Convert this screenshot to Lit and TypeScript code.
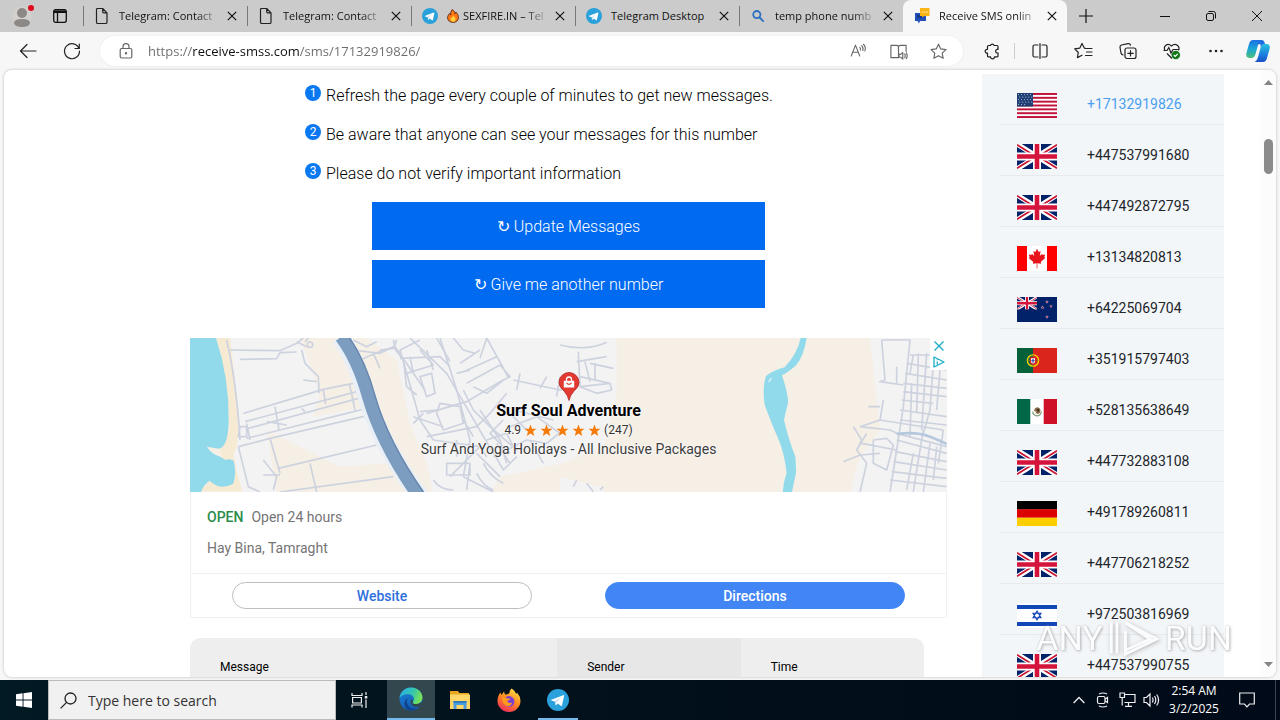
import { LitElement, html, svg, css, nothing, type TemplateResult } from "lit";
import { customElement, property } from "lit/decorators.js";

const line = (body: unknown, size = 20) => html`
  <svg width=${size} height=${size} viewBox="0 0 20 20" fill="none" stroke="currentColor"
    stroke-width="1.2" stroke-linecap="round" stroke-linejoin="round" aria-hidden="true">${body}</svg>`;

const pageIcon = html`<svg width="16" height="18" viewBox="0 0 16 18" fill="none" stroke="#222" stroke-width="1.2" stroke-linejoin="round">
  <path d="M3.5 1.5h5.2l4.3 4.3v9.4q0 1.3-1.3 1.3H3.8q-1.3 0-1.3-1.3V2.5q0-1 1-1zM8.7 1.5v3.3q0 1 1 1H13"/></svg>`;

const telegramIcon = (size: number) => html`<svg width=${size} height=${size} viewBox="0 0 24 24">
  <circle cx="12" cy="12" r="12" fill="#2aa1da"/>
  <path fill="#fff" d="M4.8 11.8 17.6 6.7c.8-.3 1.2.1 1 .9l-2.2 10.1c-.2.8-.7 1-1.4.6l-3.3-2.4-1.6 1.6c-.4.4-.8.3-.9-.3l-.7-3.5-3.6-1.1c-.7-.2-.7-.6-.1-.8z"/>
  <path fill="#b9d9ec" d="m8.5 13.7 7.1-4.9-5.4 5.6-.5 2.9z"/></svg>`;

const searchGlyph = html`<svg width="16" height="16" viewBox="0 0 16 16" fill="none" stroke="#2d6fc0" stroke-width="1.8" stroke-linecap="round">
  <circle cx="6.8" cy="6.6" r="3.6"/><path d="m9.6 9.5 3.6 3.6"/></svg>`;

const smsIcon = html`<svg width="18" height="16" viewBox="0 0 18 16">
  <path fill="#2350b8" d="M2 5h11v8H7l-1 2.500-1.500-2.500H2z"/><path fill="#173a8c" d="M4 7h6v3H4z"/>
  <path fill="#fbb416" d="M7 0h9.500v8H11L9 9.500V8H7z"/><path fill="#fff3c8" d="M9 3.500h1.200v1.200H9zM11.300 3.500h1.200v1.200h-1.200zM13.600 3.500h1.200v1.200h-1.200z"/></svg>`;

const flame = html`<svg width="12" height="14" viewBox="0 0 12 14">
  <path d="M5 .6c2.400 1.200 3 2.800 2.800 4.200.8-.3 1-1 1.100-1.700C10.600 4.700 11.400 6.600 11.400 8.600c0 3-2.300 4.800-5.300 4.800S.6 11.600.6 8.800c0-2.200 1.200-3.300 2-4.400.3.900.6 1.300 1.200 1.500C3.500 3.800 4.200 2 5 .6z" fill="#ff7a14" stroke="#4a1405" stroke-width=".8"/>
  <path d="M6 6.800c2 1.500 2.500 2.600 2.500 3.700 0 1.500-1 2.300-2.400 2.300s-2.500-.8-2.500-2.200C3.600 9.200 5.600 8.600 6 6.800z" fill="#ffd23c"/></svg>`;

const cross = html`<svg width="10" height="10" viewBox="0 0 10 10" stroke="currentColor" stroke-width="1.2"><path d="m.8.8 8.400 8.400M9.200.8.800 9.200"/></svg>`;

const ukBody = svg`
  <path fill="#012169" d="M0 0h40v25H0z"/>
  <path stroke="#fff" stroke-width="5" d="m0 0 40 25M40 0 0 25"/>
  <path stroke="#c8102e" stroke-width="1.600" d="m0 .8 18 11.200M22 13l18 11.200M40 .8 22 12M18 13 0 24.200"/>
  <path stroke="#fff" stroke-width="8" d="M20 0v25M0 12.500h40"/>
  <path stroke="#d4143a" stroke-width="4.600" d="M20 0v25M0 12.500h40"/>`;

const star = (x: number, y: number, r: number, fill: string) => {
  const pts = Array.from({ length: 10 }, (_, i) => {
    const a = -Math.PI / 2 + (i * Math.PI) / 5;
    const d = i % 2 ? r * 0.42 : r;
    return `${(x + d * Math.cos(a)).toFixed(2)},${(y + d * Math.sin(a)).toFixed(2)}`;
  });
  return svg`<polygon points=${pts.join(" ")} fill=${fill} />`;
};

const flags: Record<string, unknown> = {
  us: svg`<path fill="#fff" d="M0 0h40v25H0z"/>
    ${[0, 1, 2, 3, 4, 5, 6].map((i) => svg`<rect y=${(i * 50) / 13} width="40" height="1.92" fill="#bf1238"/>`)}
    <path fill="#1f3f74" d="M0 0h16v13.460H0z"/>
    ${Array.from({ length: 23 }, (_, i) => svg`<circle cx=${1.6 + (i % 5) * 3 + (Math.floor(i / 5) % 2) * 1.2} cy=${1.6 + Math.floor(i / 5) * 2.5} r=".55" fill="#b8c8e0"/>`)}`,
  gb: ukBody,
  ca: svg`<path fill="#fff" d="M0 0h40v25H0z"/><path fill="#f00" d="M0 0h10v25H0zM30 0h10v25H30z"/>
    <path fill="#e8141c" d="m20 2.800 1.700 3.200 1.900-.9-.8 5 2.300-2.400.5 1.300 2.600-.4-.9 2.700 1 .8-4.600 3.900.5 1.800-3.900-.6.100 5h-.8l.1-5-3.900.6.500-1.800-4.600-3.900 1-.8-.9-2.700 2.600.4.500-1.300 2.300 2.400-.8-5 1.900.9z"/>`,
  nz: svg`<path fill="#012169" d="M0 0h40v25H0z"/><svg width="20" height="12.500" viewBox="0 0 40 25">${ukBody}</svg>
    ${[[30, 5], [25.5, 10.5], [34, 9.3], [30, 20]].map(([x, y]) => svg`${star(x, y, 1.9, "#c9d4ea")}${star(x, y, 1.2, "#c8102e")}`)}`,
  pt: svg`<path fill="#da251d" d="M0 0h40v25H0z"/><path fill="#06603a" d="M0 0h16v25H0z"/>
    <circle cx="16" cy="12.500" r="5.600" fill="none" stroke="#f5d800" stroke-width="1.400"/><path stroke="#8a7d10" stroke-width=".7" fill="none" d="M10.500 12.500h11M16 7v11"/>
    <path fill="#d8222a" d="M12.800 9h6.400v4.500q0 3-3.200 3.500-3.200-.5-3.200-3.500z"/><path fill="#fff" d="M14 10.200h4v3.200q0 1.800-2 2.200-2-.4-2-2.200z"/><path fill="#2a4a9c" d="M15.400 10.800h1.200v4h-1.200z"/><path fill="#2a4a9c" d="M14.200 12.200h3.600v1h-3.600z"/>`,
  mx: svg`<path fill="#fff" d="M0 0h40v25H0z"/><path fill="#006847" d="M0 0h13.300v25H0z"/><path fill="#ce1126" d="M26.700 0H40v25H26.700z"/>
    <path fill="none" stroke="#7a9a70" stroke-width="1.200" d="M15.600 12.500q.6 4.200 4.400 4.300t4.400-4.300"/>
    <path fill="#8a6a42" d="M17 11.500q1-3.300 3.600-3.300 2.600.6 3 3.300-.2 2.800-2.600 3.600-1.400-1-3-.8 1.400-.8 1.600-1.600-1.500.2-2.600-1.200z"/><path fill="#3a3226" d="M20 10h2v2.500h-2z"/>`,
  de: svg`<path fill="#000" d="M0 0h40v8.400H0z"/><path fill="#d00" d="M0 8.300h40v8.400H0z"/><path fill="#ffce00" d="M0 16.700h40V25H0z"/>`,
  il: svg`<path fill="#fff" d="M0 0h40v25H0z"/><path fill="#1247b8" d="M0 2h40v4H0zM0 19h40v4H0z"/>
    <path fill="none" stroke="#1247b8" stroke-width="1.100" d="m20 8 4 6.800h-8zM20 17l-4-6.800h8z"/>`,
};

const tabs: { icon: TemplateResult; title: string; emoji?: boolean; active?: boolean }[] = [
  { icon: pageIcon, title: "Telegram: Contact" },
  { icon: pageIcon, title: "Telegram: Contact" },
  { icon: telegramIcon(16), title: "SEXFIRE.IN – Tel", emoji: true },
  { icon: telegramIcon(16), title: "Telegram Desktop" },
  { icon: searchGlyph, title: "temp phone numb" },
  { icon: smsIcon, title: "Receive SMS onlin", active: true },
];

const numbers: [string, string][] = [
  ["us", "+17132919826"],
  ["gb", "+447537991680"],
  ["gb", "+447492872795"],
  ["ca", "+13134820813"],
  ["nz", "+64225069704"],
  ["pt", "+351915797403"],
  ["mx", "+528135638649"],
  ["gb", "+447732883108"],
  ["de", "+491789260811"],
  ["gb", "+447706218252"],
  ["il", "+972503816969"],
  ["gb", "+447537990755"],
];

const tips = [
  "Refresh the page every couple of minutes to get new messages.",
  "Be aware that anyone can see your messages for this number",
  "Please do not verify important information",
];

@customElement("browser-tabs")
class BrowserTabs extends LitElement {
  static styles = css`
    :host { display: flex; height: 32px; background: #cbcbcb; color: #111; font: 11px/16px "Open Sans", "Noto Sans", sans-serif; }
    button { border: 0; padding: 0; background: none; color: inherit; font: inherit; display: flex; align-items: center; justify-content: center; }
    .lead { display: flex; align-items: center; width: 83px; flex: none; gap: 18px; padding-left: 12px; box-sizing: border-box; }
    .tab { display: flex; align-items: center; flex: 0 1 164px; min-width: 0; padding: 0 9px 0 10px; gap: 8px; box-sizing: border-box; position: relative; }
    .tab::before { content: ""; width: 1px; height: 20px; background: #777; position: absolute; left: 0; top: 6px; }
    .tab.active { background: #f7f7f7; border-radius: 8px 8px 0 0; }
    .tab.active::before { display: none; }
    .icon { flex: none; width: 18px; display: flex; justify-content: center; }
    .name { flex: 1; min-width: 0; justify-content: flex-start; gap: 4px; overflow: hidden; white-space: nowrap; mask-image: linear-gradient(to right, #000 78%, #0003 98%); }
    .whole { mask-image: none; }
    .name svg { flex: none; }
    .close { flex: none; width: 12px; height: 16px; }
    .plus { width: 38px; }
    .controls { margin-left: auto; display: flex; }
    .controls button { width: 46px; }
  `;
  render() {
    return html`
      <div class="lead">
        <button aria-label="Profile"><svg width="23" height="26" viewBox="0 0 23 26">
          <circle cx="10" cy="13" r="9.500" fill="#d3d0cd"/><circle cx="10" cy="10" r="5" fill="#8b8886"/><path d="M2 20q0-4 8-4t8 4q-1 4-8 4t-8-4z" fill="#8b8886"/><circle cx="19" cy="5" r="3" fill="#e00b1c"/></svg></button>
        <button aria-label="Workspaces"><svg width="14" height="14" viewBox="0 0 14 14" fill="none" stroke="#111" stroke-width="1.300"><rect x=".7" y=".7" width="12.600" height="12.600" rx="2"/><path d="M1 2.700h12" stroke-width="2.600"/><path d="M4.500 3v10"/></svg></button>
      </div>
      ${tabs.map((t) => html`
        <div class="tab ${t.active ? "active" : ""}">
          <span class="icon">${t.icon}</span>
          <button class="name ${t.title === "Telegram Desktop" ? "whole" : ""}">${t.emoji ? flame : nothing}<span>${t.title}</span></button>
          <button class="close" aria-label="Close tab">${cross}</button>
        </div>`)}
      <button class="plus" aria-label="New tab"><svg width="14" height="14" viewBox="0 0 14 14" stroke="#111" stroke-width="1.200"><path d="M7 0v14M0 7h14"/></svg></button>
      <div class="controls">
        <button aria-label="Minimize"><svg width="10" height="10" viewBox="0 0 10 10" stroke="#111"><path d="M0 5.500h10"/></svg></button>
        <button aria-label="Restore"><svg width="10" height="10" viewBox="0 0 10 10" fill="none" stroke="#111"><rect x=".5" y="2.500" width="7" height="7" rx="1.500"/><path d="M2.500.5h5q2 0 2 2v5"/></svg></button>
        <button aria-label="Close"><svg width="10" height="10" viewBox="0 0 10 10" stroke="#111"><path d="m0 0 10 10M10 0 0 10"/></svg></button>
      </div>`;
  }
}

@customElement("address-bar")
class AddressBar extends LitElement {
  static styles = css`
    :host { display: flex; align-items: center; height: 38px; background: #f7f7f7; color: #222; padding: 0 2px 0 6px; box-sizing: border-box; }
    button { border: 0; padding: 0; background: none; color: inherit; display: flex; align-items: center; justify-content: center; width: 44px; flex: none; }
    .pill { flex: 1; min-width: 0; display: flex; align-items: center; height: 30px; background: #fff; border-radius: 15px; margin: 0 7px 0 6px; padding: 0 5px 0 4px; box-sizing: border-box; color: #666; box-shadow: 0 0 2px #e4e4e4; }
    .pill button { width: 40px; }
    .pill .lock { width: 44px; }
    .url { flex: 1; min-width: 0; border: 0; outline: 0; padding: 0; font: 13px/20px "Open Sans", "Noto Sans", sans-serif; color: #555;
      background: linear-gradient(to right, #6b6b6b 45px, #111 45px, #111 151px, #6b6b6b 151px); background-clip: text; -webkit-background-clip: text; -webkit-text-fill-color: transparent; }
    .sep { width: 1px; height: 16px; background: #ccc; flex: none; margin-right: 3px; }
    .ext { width: 44px; }
    .copilot { width: 40px; }
  `;
  render() {
    return html`
      <button aria-label="Back">${line(svg`<path d="M18 10H2.500M9 3.500 2.500 10 9 16.500"/>`)}</button>
      <button aria-label="Refresh">${line(svg`<path d="M17 7.500A7.500 7.500 0 1 0 17.500 10M17.300 3v4.500H13"/>`)}</button>
      <div class="pill">
        <button class="lock" aria-label="Site information">${line(svg`<rect x="4.200" y="7.500" width="11.600" height="9.500" rx="1.500"/><path d="M7 7.500V5.600a3 3 0 0 1 6 0v1.900"/><circle cx="10" cy="12.200" r=".6" fill="currentColor"/>`)}</button>
        <input class="url" aria-label="Address" value="https://receive-smss.com/sms/17132919826/">
        <button aria-label="Read aloud">${line(svg`<path d="m2.500 15.500 4.700-12 4.700 12M4.200 11.300h6M12 6q1.200 1.200.6 3M14 4q2.400 2.400 1.300 5.500M16 2.500q3.200 3 1.600 7.500"/>`, 18)}</button>
        <button aria-label="Immersive reader">${line(svg`<path d="M10 16.500H2V3.500h6q2 0 2 2v11M10 5.500q0-2 2-2h6V10M10.500 13v3h1.800l2.200 2v-7l-2.200 2zM16.500 12.500q1.200 2 0 4M18.300 11.500q1.700 3 0 6"/>`, 19)}</button>
        <button aria-label="Favourite">${line(svg`<path d="m10 2.300 2.400 5 5.500.7-4 3.800 1 5.400-4.900-2.600-4.900 2.600 1-5.400-4-3.800 5.500-.7z"/>`, 19)}</button>
      </div>
      <button class="ext" aria-label="Extensions">${line(svg`<path d="M6.500 4.500h2a1.900 1.900 0 0 1 3.600 0H15q1 0 1 1v3a1.800 1.800 0 1 0 0 3.400v3q0 1-1 1h-2.600a1.900 1.900 0 0 1-3.800 0H6.500q-1 0-1-1v-2.800a1.900 1.900 0 1 1 0-3.700V5.500q0-1 1-1z"/>`)}</button>
      <span class="sep"></span>
      <button aria-label="Split screen">${line(svg`<path d="M8 4H4.500Q3 4 3 5.500v9Q3 16 4.500 16H8M12 4h3.500Q17 4 17 5.500v9q0 1.500-1.500 1.500H12M10 2.500v15"/>`)}</button>
      <button aria-label="Favorites">${line(svg`<path d="m12 7.500-1.700-.4L8 2.500 5.700 7.200l-5 .7 3.600 3.600-.9 5.100L8 14.200M12.500 7.500H18M12.500 11H18M11.500 14.500H18"/>`)}</button>
      <button aria-label="Collections">${line(svg`<rect x="7" y="7" width="11" height="10.500" rx="2"/><path d="M12.500 9.500v5.500M9.800 12.300h5.500M5 14Q3.500 13.500 3 12L2 6.500Q1.800 4.500 3.500 4L10 2.700q2-.3 2.500 1.500"/>`)}</button>
      <button aria-label="Browser essentials"><svg width="20" height="20" viewBox="0 0 20 20" fill="none" stroke="currentColor" stroke-width="1.200"><path d="M3 9.500C.8 5 5.500 1.300 9.500 5 13.500 1.300 18.500 5 16.500 9.500M1.500 9.500H5l1.800-3L9 12l2-3.500h5.500M5 12.500l5 5"/><circle cx="13.800" cy="14" r="4.300" fill="#137a1c" stroke="none"/><path d="m11.800 14 1.400 1.400 2.600-2.600" stroke="#fff"/></svg></button>
      <button aria-label="Settings and more"><svg width="20" height="20" viewBox="0 0 20 20" fill="#222"><circle cx="4.500" cy="10" r="1.300"/><circle cx="10" cy="10" r="1.300"/><circle cx="15.500" cy="10" r="1.300"/></svg></button>
      <button class="copilot" aria-label="Copilot"><svg width="24" height="24" viewBox="0 0 24 24">
        <defs><linearGradient id="c1" x2="0" y2="1"><stop stop-color="#1b6fe0"/><stop offset=".5" stop-color="#1aa7d8"/><stop offset="1" stop-color="#4fc07a"/></linearGradient>
        <linearGradient id="c2" x2="0" y2="1"><stop stop-color="#27c0dc"/><stop offset=".6" stop-color="#1b7ee0"/><stop offset="1" stop-color="#1a4fc4"/></linearGradient></defs>
        <path fill="url(#c1)" d="M7 1h8.500Q13 2 12 6L9.500 15q-1 4-4 4H3Q-.8 18.500.6 13.500L3 5q1-4 4-4z"/>
        <path fill="url(#c2)" d="M17 23H8.500q2.500-1 3.500-5l2.500-9q1-4 4-4H21q3.800.5 2.400 5.500L21 19q-1 4-4 4z"/>
        <path fill="#1b6fe0" d="M13 1h3q2 .3 2.600 2.500L19 5q-3.500.2-4.500 4l.2-1Q15 3 11.500 6z"/></svg></button>`;
  }
}

@customElement("ad-card")
class AdCard extends LitElement {
  static styles = css`
    :host { display: block; border: 1px solid #f1f1f1; border-top: 0; font: 14px/20px Roboto, sans-serif; color: #757575; position: relative; }
    .map { position: relative; height: 154px; margin: 0 -1px; overflow: hidden; background: #f5efe6; }
    .map > svg { display: block; width: 100%; height: 100%; }
    .place { position: absolute; inset: 34px 0 0; display: flex; flex-direction: column; align-items: center; color: #3c3c3c; }
    .place, .place * { text-shadow: 0 0 2px #fff, 0 0 2px #fff; }
    .pin { flex: none; }
    .title { font-size: 16px; font-weight: 700; color: #000; line-height: 20px; margin: 0; }
    .rating { display: flex; align-items: center; gap: 3px; font-size: 12px; line-height: 18px; color: #333; }
    .tag { font-size: 14px; line-height: 20px; }
    .marks { position: absolute; top: 0; right: 0; width: 17px; background: #fff; display: flex; flex-direction: column; align-items: center; }
    .marks button { border: 0; padding: 0; background: none; width: 17px; height: 16px; display: flex; align-items: center; justify-content: center; }
    .info { padding: 15px 16px; display: flex; flex-direction: column; gap: 11px; border-bottom: 1px solid #f1f1f1; }
    .open { color: #2c8c4c; font-weight: 500; margin-right: 8px; }
    .actions { display: grid; grid-template-columns: 1fr 1fr; gap: 73px; padding: 8px 41px; }
    .actions a { box-sizing: border-box; height: 27px; line-height: 26px; border: 1px solid #bdbdbd; border-radius: 14px; text-align: center; color: #2f6fdc; text-decoration: none; font-weight: 500; }
    .actions .go { background: #4285f4; border-color: #4285f4; color: #fff; }
  `;
  render() {
    const star5 = html`<svg width="13" height="13" viewBox="0 0 13 13">${star(6.5, 6.8, 6.3, "#f57c0a")}</svg>`;
    return html`
      <div class="map">
        <svg viewBox="30 24 2271 462" preserveAspectRatio="none" fill="none" aria-hidden="true">
          <path fill="#f4f3f3" d="M150 24H360L420 190 400 260 560 230 620 400 480 410 260 300 290 490H180L160 350 180 300z"/>
          <path fill="#f4f3f3" d="M560 24H1310V200L1270 350 1150 400 960 440 930 490H760L740 400 690 280 650 90z"/>
          <path fill="#f4f3f3" d="M1140 440 1260 470 1280 490H1140zM2070 24H2301V486H2010L2040 380 2100 300z"/>
          <path fill="#f6ead2" d="M110 24h40q20 150 25 280l-5 50q-15 20-8 40l25 90H60l30-30 60 5-30-100 30-60z"/>
          <path fill="#90daeb" d="M30 24h78q40 120 38 250-2 80-30 82l-35-6q10 20 40 30l15 10q15-6 25 2 10 40-2 70-40 20-70-10-20 14-26 34H30z"/>
          <g stroke="#cdd2df" stroke-width="5" stroke-linejoin="round">
            <path d="M140 30q30 130 40 300M150 60 300 62 350 40 370 24M180 88 290 86 300 68 350 66M365 60 375 100 415 140 417 190M370 150 410 155M350 35 380 50M385 24l-10 12"/>
            <circle cx="390" cy="44" r="8"/>
            <path d="M190 250 430 178 520 160M195 275 530 185M205 295 535 205M200 325 560 235M200 280 210 330M285 230 297 300M430 180 437 222M508 160 525 240M180 290h20v30h-25zM375 245l-10-10M320 285l-60-10"/>
            <path d="M175 350 270 325 590 250M270 325 300 430M295 415 590 345M390 400 410 486M300 486 640 440M175 350 205 470 240 486M250 435h50M250 390l40 50-10 40"/>
            <path d="M530 160 590 320 690 486M520 60 600 70 640 50M540 90 610 60M580 70 600 115M640 30l5 20 90 130M520 30 560 50 590 35"/>
            <path d="M690 24 800 130 940 370M720 30 660 60 680 130 760 105 720 60M660 85 780 80 810 110M690 80l10 50M740 60l20 60M770 24l40 70M680 130 720 270 760 330M720 140l20 60 25-10-10-60zM640 50 670 90 680 170 710 195"/>
            <path d="M820 24 850 60 885 70M840 100 900 60M850 125 950 80M900 85l20-60M830 130 870 120M860 160 960 105 990 140 960 155 860 215 740 250M920 24l50 90 15 30M850 180 880 240 930 290 1010 360M1000 150 1140 180 1190 170M1010 180 1020 130M1080 175 1100 140M1140 140 1130 200"/>
            <path d="M780 24 830 180 870 330 850 440M780 220l60 10 10 50-60 20-20-50zM720 245 770 240M700 260 790 290M740 320 890 290 930 250 980 190M760 330 900 350 920 380M850 270 880 320M900 240 960 330 980 400M960 220 1040 300M920 330l60-20 20 40M940 380 1040 330 1100 340 1150 300"/>
            <path d="M800 400h70v35H800zM810 440 870 380 900 350M850 440 940 486M760 450q20 30 60 30M870 400l-10 80M890 430q20 40 50 50M910 400q20 40 60 60M890 370 960 440M930 350 970 420 1010 380M990 290 1070 260 1140 310M1050 330 1090 400M1000 240 1120 270"/>
            <path d="M650 30 640 55 600 60M880 170l40 20 50-40M700 280l30-30M830 330v50M950 340l40 60M970 270l-40 40 60 60"/>
            <path d="M1140 45q80 20 140-8M1195 65 1200 170 1250 190 1295 180 1290 160 1200 170M1190 95 1280 80M1230 100 1300 115M1215 95l15 60M1245 100v50M1200 140 1290 160M1180 470 1190 450M1220 460l20 25M1260 480l10-10"/>
          </g>
          <g transform="translate(1140 0)" stroke="#cdd2df" stroke-width="5" stroke-linejoin="round">
            <path d="M965 30h85l-20 200-20 130-20 126M965 30 975 150 960 155 1030 165M970 210 960 270 900 290M925 230h35M1010 110v50M960 270 1150 300M900 290 990 300 1010 310M880 290l25 40-15 30 30 40-20 86M850 395 900 375 960 370M920 310l-30 50M940 330 980 325 1000 345 980 420 940 400zM905 340 1010 360"/>
            <path d="M1040 100 1160 120M1035 130 1160 150M1030 160 1160 175M1030 185 1160 200M1025 210 1120 220M1020 240 1160 260M1020 270 1160 285M1010 310 1160 350M1010 330 1160 370M1005 365 1160 395M1000 395 1160 420M995 425 1160 445M990 450 1160 470M1060 75 1050 130M1075 70 1070 250M1100 70 1085 300M1120 100 1110 240 1090 310M1140 120 1130 240M1055 160 1050 320M1060 370 1040 480M1090 300 1070 420 1060 486M1110 340 1090 486M1130 350 1120 450M1150 300 1135 400M1050 75h60"/>
            <path stroke="#b6c8dd" stroke-width="8" d="M1010 312q60-8 100 8t50 22"/>
          </g>
          <path stroke="#e8eff7" stroke-width="54" d="M480 20Q530 90 560 200 600 340 720 500"/>
          <path stroke="#7c9cc0" stroke-width="40" d="M484 20Q536 90 566 200 606 340 718 500"/>
          <path stroke="#6885ab" stroke-width="4" d="M506 20Q556 90 586 200 626 340 740 500"/>
          <path fill="#90daeb" d="M1862 24h18q-10 60-34 84-24 20-40 28 20 60 18 84-8 30-12 50 14 60 34 110 2 30 2 48l-12 58h-28q2-30 12-58-8-60-22-94-30-70-44-110-8-50 4-86 20-16 56-26 38-40 48-88z"/>
          <path stroke="#e9fafd" stroke-width="4" d="m1766 156 8-12"/>
        </svg>
        <div class="place">
          <svg class="pin" width="22" height="29" viewBox="0 0 22 29"><path d="M11 28.500Q10 23.500 6 19 1 15 1 10.500a10 10 0 0 1 20 0Q21 15 16 19q-4 4.500-5 9.500z" fill="#e23a33" stroke="#b3261f" stroke-width=".8"/><path fill="#fff" d="M5.800 8.800h10.400v6.700H5.800z"/><path fill="none" stroke="#fff" stroke-width="1.300" d="M8.500 9V7.500a2.500 2.500 0 0 1 5 0V9"/><path fill="none" stroke="#e23a33" stroke-width="1.200" d="M8.500 10.800q2.500 3 5 0"/></svg>
          <h2 class="title">Surf Soul Adventure</h2>
          <div class="rating"><span>4.9</span>${[1, 2, 3, 4, 5].map(() => star5)}<span>(247)</span></div>
          <div class="tag">Surf And Yoga Holidays - All Inclusive Packages</div>
        </div>
        <div class="marks">
          <button aria-label="Close ad"><svg width="10" height="10" viewBox="0 0 10 10" stroke="#1badc5" stroke-width="1.400"><path d="m.5.500 9 9M9.500.500l-9 9"/></svg></button>
          <button aria-label="Ad choices"><svg width="12" height="12" viewBox="0 0 12 12" fill="none" stroke="#1badc5" stroke-width="1.300" stroke-linejoin="round"><path d="M1 1v10l10-5zM4.300 5.500v3M4.300 3.500v.7"/></svg></button>
        </div>
      </div>
      <div class="info">
        <div><span class="open">OPEN</span><span>Open 24 hours</span></div>
        <div>Hay Bina, Tamraght</div>
      </div>
      <div class="actions"><a href="#website">Website</a><a class="go" href="#directions">Directions</a></div>`;
  }
}

@customElement("number-row")
class NumberRow extends LitElement {
  @property() country = "";
  @property() number = "";
  @property({ type: Boolean }) current = false;
  static styles = css`
    :host { display: block; border-bottom: 1px solid #e6eaed; }
    .row { display: flex; align-items: center; gap: 30px; height: 50px; padding: 10px 0 0 17px; box-sizing: border-box; color: #212529; text-decoration: none; font: 14px/20px Roboto, sans-serif; }
    .row svg { flex: none; margin-top: 2px; }
    .current { color: #4a9ff0; }
  `;
  render() {
    return html`<a class="row ${this.current ? "current" : ""}" href="#${this.number}">
      <svg width="40" height="25" viewBox="0 0 40 25" aria-hidden="true">${flags[this.country]}</svg>
      <span>${this.number}</span></a>`;
  }
}

@customElement("task-bar")
class TaskBar extends LitElement {
  static styles = css`
    :host { display: flex; height: 40px; background: linear-gradient(to right, #021a23, #02101b 50%, #010a18); color: #fff; }
    button { border: 0; padding: 0; background: none; color: inherit; display: flex; align-items: center; justify-content: center; flex: none; width: 48px; }
    .search { display: flex; align-items: center; flex: 0 1 288px; box-sizing: border-box; background: #f1f1f1; border: 1px solid #b9bcbd; padding-left: 11px; gap: 11px; }
    .search input { flex: 1; min-width: 0; border: 0; outline: 0; padding: 2px 0 0; background: none; font: 14px/20px "Open Sans", "Noto Sans", sans-serif; }
    .search input::placeholder { color: #333; opacity: 1; }
    .apps { display: flex; gap: 1px; padding-left: 3px; }
    .edge { background: #33474f; border-bottom: 2px solid #76b9ed; }
    .running { background: linear-gradient(#76b9ed, #76b9ed) bottom / 40px 2px no-repeat; }
    .tray { margin-left: auto; display: flex; }
    .tray button { width: 24px; }
    .tray .clock { width: 62px; flex-direction: column; font: 12px/18px "Open Sans", "Noto Sans", sans-serif; white-space: nowrap; }
    .tray .note { width: 44px; }
    .desk { border-left: 1px solid #3b434e; margin-left: 6px; width: 4px; }
  `;
  render() {
    return html`
      <button aria-label="Start"><svg width="16" height="16" viewBox="0 0 16 16" fill="#fff"><path d="M0 2.200 6.600 1.300V7.600H0zM7.500 1.200 16 0v7.600H7.500zM0 8.400h6.600v6.300L0 13.800zM7.500 8.400H16V16l-8.500-1.200z"/></svg></button>
      <label class="search"><svg width="17" height="17" viewBox="0 0 17 17" fill="none" stroke="#222" stroke-width="1.300"><circle cx="10.500" cy="6.500" r="5.500"/><path d="M6.600 10.400.6 16.400"/></svg>
        <input placeholder="Type here to search" aria-label="Type here to search"></label>
      <button aria-label="Task view"><svg width="18" height="16" viewBox="0 0 18 16" fill="none" stroke="#eee" stroke-width="1.200"><path d="M1 1v2.500h10V1M1 15.500V13h10v2.500M1.600 5.500h8.800v5.500H1.600zM15 0v3M15 7.500V16"/><path d="M13.800 4h2.500v2.500h-2.500z" fill="#eee" stroke="none"/></svg></button>
      <div class="apps">
        <button class="edge" aria-label="Edge"><svg width="24" height="24" viewBox="0 0 24 24">
          <defs><linearGradient id="e1" x2="1" y2=".3"><stop stop-color="#2bb0e8"/><stop offset=".6" stop-color="#33c6b0"/><stop offset="1" stop-color="#74e05c"/></linearGradient><linearGradient id="e2" x2=".6" y2="1"><stop stop-color="#1a86d8"/><stop offset="1" stop-color="#1459b0"/></linearGradient></defs>
          <circle cx="12" cy="12" r="11.500" fill="url(#e2)"/>
          <path fill="url(#e1)" d="M.6 11C1.200 5 6 .5 12 .5c6.500 0 11.500 4.700 11.500 10 0 4-3 6.500-6.500 6.500-2.500 0-3.700-.9-3.500-1.600.3-.9 1.400-1.400 1.400-3.500 0-2.700-2.800-4.700-6.400-4.700C4.800 7.200 1.800 8.600.6 11z"/>
          <path fill="#0f438e" d="M9 11q-2.500 3 0 7 3 5 9 3.500Q15 24 11 23.400 5 22 5.500 16 6 12 9 11z"/>
          <path fill="#33474f" d="M13.500 15.400q-.5 1.700 3.500 1.700 3 0 5-1.500l1.500.4q-1 2-2.200 3-5 2.200-8.300-.8-2-2-1-5.500 1.500-.2 2 1 0 .9-.5 1.700z"/></svg></button>
        <button aria-label="File Explorer"><svg width="22" height="20" viewBox="0 0 22 20"><path fill="#e8a520" d="M1 1h8l1.500 2H20v5H1z"/><path fill="#ffd667" d="M1 4.500h20V19H1z"/><path fill="#4a9ede" d="M4.500 11h13v8h-3v-4h-7v4h-3z"/><path fill="#2d7cc0" d="M4.500 11h13v2h-13z"/></svg></button>
        <button aria-label="Firefox"><svg width="24" height="24" viewBox="0 0 24 24">
          <defs><linearGradient id="f1" x1=".8" x2=".3" y2="1"><stop stop-color="#ffe14a"/><stop offset=".5" stop-color="#ff8a1e"/><stop offset="1" stop-color="#f02c5e"/></linearGradient></defs>
          <path fill="url(#f1)" d="M14.500.5q4 2.500 4.500 5.500l1.200-1.200Q23.500 8.500 23.500 13A11.500 11 0 0 1 .5 13Q.5 8 3.500 4.500L4.500 7 7 3.500 8 6.500q3 0 4.500-1.500Q12.500 2.500 14.500.500z"/>
          <circle cx="12" cy="13.500" r="5.400" fill="#7b3fd4"/><path fill="#ff9a1e" d="M5 9q4 0 5 1.500h3.500q-1 2-3.500 2.500 1.500 3 5.500 1.500Q13.500 19 9.500 18 5 16 5 9z"/></svg></button>
        <button class="running" aria-label="Telegram">${telegramIcon(22)}</button>
      </div>
      <div class="tray">
        <button aria-label="Hidden icons"><svg width="12" height="8" viewBox="0 0 12 8" fill="none" stroke="#eee" stroke-width="1.300"><path d="m.6 7 5.400-5.500L11.400 7"/></svg></button>
        <button aria-label="Camera"><svg width="14" height="16" viewBox="0 0 14 16" fill="none" stroke="#eee" stroke-width="1.200"><rect x="1.500" y="4.500" width="7.500" height="7" rx="1.500"/><path d="m9 7.200 2.500-1.700v5L9 8.800M3 2q4-2 8 0M3 14q4 2 8 0"/></svg></button>
        <button aria-label="Network"><svg width="17" height="16" viewBox="0 0 17 16" fill="none" stroke="#eee" stroke-width="1.200"><path d="M6 2.500h10v8H5.500M9.500 10.500V14M6 14.300h7M1 1h4.500v4.500H1zM3.200 5.500v8"/></svg></button>
        <button aria-label="Volume"><svg width="17" height="16" viewBox="0 0 17 16" fill="none" stroke="#eee" stroke-width="1.200"><path d="M1 5.500h2.500L7 2v12L3.500 10.500H1zM9.300 5.500q1.600 2.500 0 5M11.500 4q2.600 4 0 8M13.700 2.500q3.800 5.500 0 11"/></svg></button>
        <button class="clock"><span>2:54 AM</span><span>3/2/2025</span></button>
        <button class="note" aria-label="Notifications"><svg width="16" height="16" viewBox="0 0 16 16" fill="none" stroke="#eee" stroke-width="1.200"><path d="M.7 1h14.600v11H10.500L8 14.800 5.500 12H.7z"/></svg></button>
        <span class="desk"></span>
      </div>`;
  }
}

@customElement("app-root")
class AppRoot extends LitElement {
  static styles = css`
    :host { display: flex; flex-direction: column; height: 100vh; overflow: hidden; background: #f7f7f7; position: relative; font-family: Roboto, sans-serif; }
    .frame { flex: 1; min-height: 0; margin: 0 4px 3px; display: flex; background: #fff; border-radius: 8px; overflow: hidden; box-shadow: 0 0 3px #b8b8b8; }
    .content { flex: 1; min-width: 0; display: grid; grid-template-columns: minmax(0, 1fr) 242px; gap: 35px; padding: 4px 36px 0 186px; }
    .tips { list-style: none; margin: 0; padding: 10px 0 16px 115px; display: flex; flex-direction: column; gap: 15px; font-weight: 300; font-size: 16px; line-height: 24px; color: #000; }
    .tips li { display: flex; gap: 5px; }
    .badge { width: 16px; height: 16px; margin-top: 1px; border-radius: 50%; background: #0a78f0; color: #fff; font-size: 12px; font-weight: 400; line-height: 16px; text-align: center; }
    .actions { display: flex; flex-direction: column; align-items: center; gap: 10px; margin-bottom: 30px; }
    .actions button { width: 52%; height: 48px; padding: 2px 0 0; border: 0; background: #006af0; color: #fff; font: 300 16px/24px Roboto, "DejaVu Sans", sans-serif; }
    .messages { width: 97%; margin-top: 20px; border-collapse: collapse; table-layout: fixed; border-radius: 10px 10px 0 0; overflow: hidden; background: #eee; }
    .messages th { padding: 20px 0 18px 30px; font-size: 12px; line-height: 18px; font-weight: 400; text-align: left; color: #000; }
    .messages th:first-child { width: 50%; box-sizing: border-box; }
    .messages .sender { background: #e7e7e7; }
    .side { background: #f3f6f9; padding-left: 18px; }
    .scroll { width: 16px; background: #fcfcfc; display: flex; flex-direction: column; align-items: center; padding: 10px 0; box-sizing: border-box; }
    .thumb { width: 9px; height: 35px; border-radius: 5px; background: #8b8b8b; margin-top: 54px; }
    .down { margin-top: auto; }
    .mark { position: absolute; right: 48px; bottom: 64px; display: flex; align-items: center; gap: 5px; color: #fff; opacity: 0.7; font: 400 34px/30px Roboto, sans-serif; text-shadow: 1px 1px 3px #999, 0 0 2px #aaa; pointer-events: none; }
    .mark svg { filter: drop-shadow(1px 1px 2px #999); }
  `;
  render() {
    return html`
      <browser-tabs></browser-tabs>
      <address-bar></address-bar>
      <div class="frame">
        <div class="content">
          <main>
            <ul class="tips">${tips.map((t, i) => html`<li><span class="badge">${i + 1}</span><span>${t}</span></li>`)}</ul>
            <div class="actions"><button>↻ Update Messages</button><button>↻ Give me another number</button></div>
            <ad-card></ad-card>
            <table class="messages"><thead><tr><th>Message</th><th class="sender">Sender</th><th>Time</th></tr></thead></table>
          </main>
          <aside class="side">${numbers.map(([c, n], i) => html`<number-row .country=${c} .number=${n} ?current=${i === 0}></number-row>`)}</aside>
        </div>
        <div class="scroll">
          <svg width="9" height="5" viewBox="0 0 9 5" fill="#858585"><path d="M4.500 0 9 5H0z"/></svg>
          <span class="thumb"></span>
          <svg class="down" width="9" height="5" viewBox="0 0 9 5" fill="#858585"><path d="M0 0h9L4.500 5z"/></svg>
        </div>
      </div>
      <task-bar></task-bar>
      <div class="mark"><span>ANY</span>
        <svg width="52" height="36" viewBox="0 0 52 38" fill="none" stroke="#fff" stroke-width="3"><path d="M2 2v33M8 2v33M17 12v24l33-16L17 3l26 17-26 12"/></svg>
        <span>RUN</span></div>`;
  }
}
